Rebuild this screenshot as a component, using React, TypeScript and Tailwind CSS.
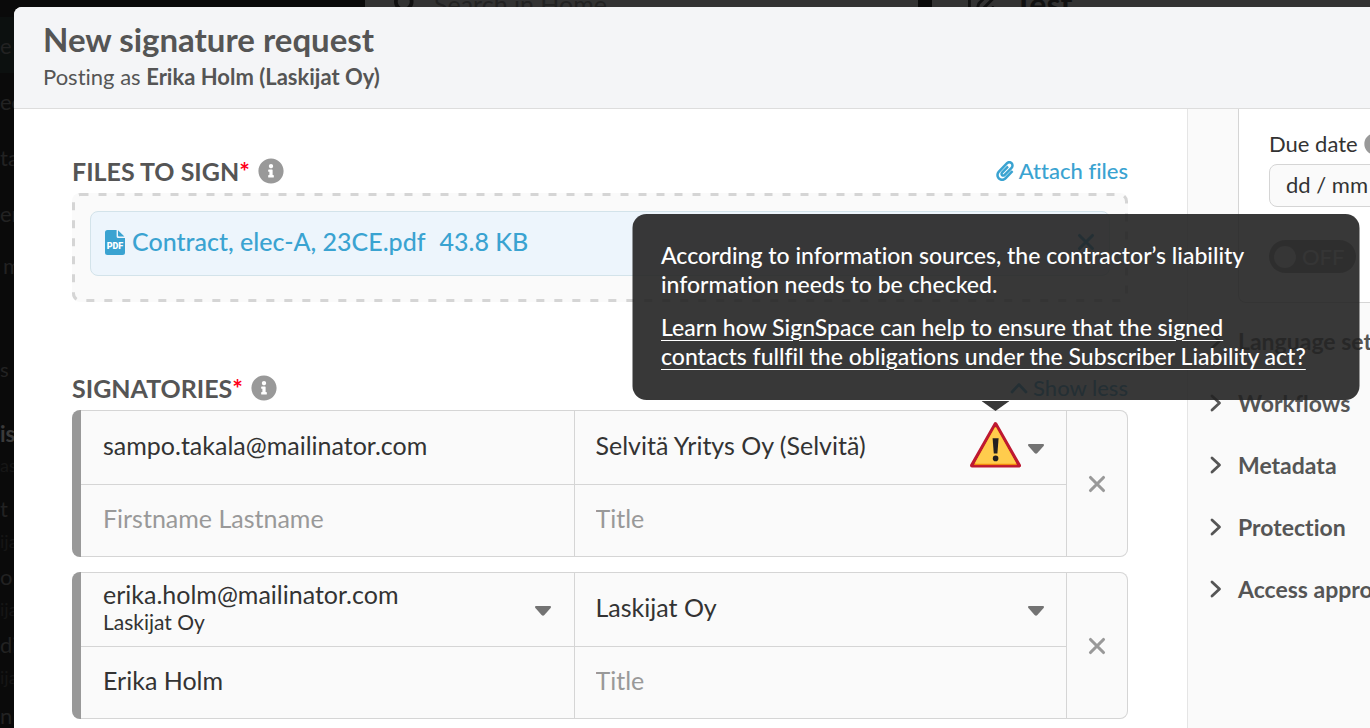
import { useState } from 'react'
import { clsx } from 'clsx'
import { FaInfoCircle, FaPaperclip, FaSearch } from 'react-icons/fa'
import { FaRegPenToSquare } from 'react-icons/fa6'

interface Signatory {
  id: string
  email: string
  emailNote?: string
  name: string
  company: string
  title: string
  warning?: boolean
}

const initialSignatories: Signatory[] = [
  {
    id: 'sampo',
    email: 'sampo.takala@mailinator.com',
    name: '',
    company: 'Selvitä Yritys Oy (Selvitä)',
    title: '',
    warning: true,
  },
  {
    id: 'erika',
    email: 'erika.holm@mailinator.com',
    emailNote: 'Laskijat Oy',
    name: 'Erika Holm',
    company: 'Laskijat Oy',
    title: '',
  },
]

const settings = ['Language settings', 'Workflows', 'Metadata', 'Protection', 'Access approval']

// Sidebar rows that stay visible behind the dialog
const backdropRows = [
  { text: 'e', className: 'h-14 text-[22px] bg-[#0c100f]' },
  { text: 'ec', className: 'h-14 text-[22px]' },
  { text: 'ta', className: 'h-14 text-[22px]' },
  { text: 'er', className: 'h-14 text-[22px]' },
  { text: 'm', className: 'h-12 text-[22px] pl-[3px]' },
  { text: '', className: 'h-[52px]' },
  { text: 's', className: 'h-20 pb-6 text-[20px]' },
  { text: 'is', className: 'h-6 text-[22px] font-bold text-[#3a3a3a]' },
  { text: 'as', className: 'h-10 text-[18px] text-[#161616]' },
  { text: 't g', className: 'h-[46px] text-[22px]' },
  { text: 'ija', className: 'h-5 text-[18px] text-[#161616]' },
  { text: 'o', className: 'h-[50px] text-[22px]' },
  { text: 'ija', className: 'h-4 text-[18px] text-[#161616]' },
  { text: 'di', className: 'h-[54px] text-[22px]' },
  { text: 'ija', className: 'h-3 text-[18px] text-[#161616]' },
  { text: 'n r', className: 'h-16 text-[22px]' },
]

function Cross({ className }: { className?: string }) {
  return (
    <svg viewBox="0 0 18 18" className={className} fill="none" stroke="currentColor" strokeWidth="3.1" strokeLinecap="round">
      <path d="M2.5 2.5 15.5 15.5M15.5 2.5 2.5 15.5" />
    </svg>
  )
}

function Chevron({ className }: { className?: string }) {
  return (
    <svg viewBox="0 0 12 18" className={className} fill="none" stroke="currentColor" strokeWidth="2.8" strokeLinecap="round" strokeLinejoin="round">
      <path d="M2 2 9.5 9 2 16" />
    </svg>
  )
}

function Caret() {
  return (
    <svg viewBox="0 0 18 10" className="pointer-events-none mt-[3px] h-[10px] w-[18px] shrink-0" fill="#737373">
      <path d="M2 0H16Q17.6 0.4 16.6 2L10.4 9Q9 10.4 7.6 9L1.4 2Q0.4 0.4 2 0Z" />
    </svg>
  )
}

function PdfIcon() {
  return (
    <svg viewBox="0 0 20 25" className="h-[25px] w-5 shrink-0">
      <path d="M2.5 0H11.6v6.5A1.5 1.5 0 0 0 13.1 8H20v14.5a2.5 2.5 0 0 1-2.5 2.5h-15A2.5 2.5 0 0 1 0 22.5v-20A2.5 2.5 0 0 1 2.5 0Z" fill="#3aa3d1" />
      <path d="M13 0.2 19.4 6.6H14a1 1 0 0 1-1-1Z" fill="#3aa3d1" />
      <text x="10" y="19" textAnchor="middle" fontSize="9" fontWeight="900" fontFamily="Roboto, sans-serif" fill="#fff">
        PDF
      </text>
    </svg>
  )
}

function WarningIcon() {
  return (
    <svg viewBox="0 0 51 46" className="h-[46px] w-[51px]">
      <path d="M25.5 2.2 49 43.5H2Z" fill="#be1931" stroke="#be1931" strokeWidth="4" strokeLinejoin="round" />
      <path d="M25.5 5 46.5 42.6H4.5Z" fill="#f4900c" stroke="#f4900c" strokeWidth="1" strokeLinejoin="round" />
      <path d="M25.5 6.2 45.2 41H5.8Z" fill="#ffcc4d" stroke="#ffcc4d" strokeWidth="1.5" strokeLinejoin="round" />
      <path d="M22.6 16.2h6l-1.2 15.2h-3.6Z" fill="#231f20" />
      <circle cx="25.6" cy="36.4" r="2.8" fill="#231f20" />
    </svg>
  )
}

function SectionTitle({ children }: { children: string }) {
  return (
    <div className="flex items-center gap-2">
      <h2 className="text-[25px] leading-[26px] font-bold text-[#555]">
        {children}
        <span className="text-[#ff0019]">*</span>
      </h2>
      <button type="button" aria-label={`About ${children.toLowerCase()}`}>
        <FaInfoCircle className="size-[26px] text-[#999]" />
      </button>
    </div>
  )
}

function LiabilityTooltip() {
  return (
    <div
      role="tooltip"
      className="absolute bottom-full left-1/2 z-20 mb-[22px] w-[727px] -translate-x-1/2 rounded-[14px] bg-[#222]/90 px-[29px] pt-[27px] pb-[29px] text-[23px] leading-[29px] font-medium text-white"
    >
      <p>According to information sources, the contractor’s liability information needs to be checked.</p>
      <a href="#liability" className="mt-[14px] block underline decoration-1 underline-offset-4">
        Learn how SignSpace can help to ensure that the signed
        <br />
        contacts fullfil the obligations under the Subscriber Liability act?
      </a>
      <svg viewBox="0 0 28 10" className="absolute top-full left-1/2 mt-px h-[10px] w-7 -translate-x-1/2">
        <path d="M0 0H28L14 10Z" fill="#383838" />
      </svg>
    </div>
  )
}

interface SignatoryCardProps {
  signatory: Signatory
  onChange: (id: string, field: 'email' | 'name' | 'title', value: string) => void
  onRemove: (id: string) => void
}

function SignatoryCard({ signatory, onChange, onRemove }: SignatoryCardProps) {
  const { id, email, emailNote, name, company, title, warning } = signatory
  const inputClass = 'w-full min-w-0 bg-transparent outline-none placeholder:text-[#999]'

  return (
    <div className="flex rounded-lg bg-[#fafafa] text-[25px] text-[#333]">
      <div className="w-[9px] shrink-0 rounded-l-lg bg-[#999]" />
      <div className="grid flex-1 grid-cols-[1fr_1fr_61px] grid-rows-[74px_71px] rounded-r-lg border border-l-0 border-[#d5d5d5]">
        <div className="flex items-center border-b border-[#d5d5d5] px-[22px]">
          <div className="flex-1 pb-1">
            <input
              aria-label="Email"
              className={clsx(inputClass, 'block', emailNote && 'h-7')}
              value={email}
              onChange={(e) => onChange(id, 'email', e.target.value)}
            />
            {emailNote && <p className="text-[21px] leading-[26px]">{emailNote}</p>}
          </div>
          {emailNote && (
            <button type="button" aria-label="Choose email">
              <Caret />
            </button>
          )}
        </div>
        <div className="flex items-center border-b border-l border-[#d5d5d5] px-[21px]">
          <select aria-label="Company" className="min-w-0 flex-1 appearance-none bg-transparent pb-1 outline-none" defaultValue={company}>
            <option>{company}</option>
          </select>
          {warning && (
            <div className="relative mr-[6px] mb-[6px] shrink-0">
              <WarningIcon />
              <LiabilityTooltip />
            </div>
          )}
          <Caret />
        </div>
        <div className="row-span-2 flex items-center justify-center border-l border-[#d5d5d5]">
          <button type="button" aria-label={`Remove ${email}`} className="text-[#999]" onClick={() => onRemove(id)}>
            <Cross className="size-[18px]" />
          </button>
        </div>
        <div className="flex items-center px-[22px] pb-1">
          <input
            aria-label="Name"
            className={inputClass}
            placeholder="Firstname Lastname"
            value={name}
            onChange={(e) => onChange(id, 'name', e.target.value)}
          />
        </div>
        <div className="flex items-center border-l border-[#d5d5d5] px-[21px] pb-1">
          <input
            aria-label="Title"
            className={inputClass}
            placeholder="Title"
            value={title}
            onChange={(e) => onChange(id, 'title', e.target.value)}
          />
        </div>
      </div>
    </div>
  )
}

function Backdrop() {
  return (
    <div aria-hidden="true" className="flex h-full text-[#222]">
      <div className="w-[365px] overflow-hidden pt-[17px]">
        {backdropRows.map((row, index) => (
          <div key={index} className={clsx('flex items-center whitespace-nowrap', row.className)}>
            {row.text}
          </div>
        ))}
      </div>
      <div className="flex h-[22px] flex-1 items-start overflow-hidden bg-[#333] leading-8">
        <div className="-mt-3 flex w-[553px] items-center pl-[29px] text-[25px]">
          <FaSearch className="size-6 text-[#111]" />
          <span className="ml-4">Search in Home</span>
        </div>
        <div className="-mt-3 flex flex-1 items-center border-l-[14px] border-[#0a0a0a] pl-[36px] text-[32px] font-bold text-[#111]">
          <FaRegPenToSquare className="size-[30px]" />
          <span className="ml-4">Test</span>
        </div>
      </div>
    </div>
  )
}

export default function App() {
  const [signatories, setSignatories] = useState(initialSignatories)
  const [reminder, setReminder] = useState(false)
  const [dueDate, setDueDate] = useState('dd / mm / yyyy')

  const handleChange = (id: string, field: 'email' | 'name' | 'title', value: string) => {
    setSignatories((list) => list.map((s) => (s.id === id ? { ...s, [field]: value } : s)))
  }

  const handleRemove = (id: string) => {
    setSignatories((list) => list.filter((s) => s.id !== id))
  }

  return (
    <div className="relative h-screen overflow-hidden bg-[#0a0a0a] font-[Lato,sans-serif] [font-variant-ligatures:none]">
      <Backdrop />

      <div
        role="dialog"
        aria-labelledby="dialog-title"
        className="absolute top-[7px] right-0 bottom-0 left-[14px] flex flex-col rounded-tl-lg bg-white"
      >
        <header className="rounded-tl-lg border-b border-[#ddd] bg-[#f4f5f7] px-[29px] pt-3 pb-[15px] text-[#555]">
          <h1 id="dialog-title" className="text-[33px] leading-10 font-bold">
            New signature request
          </h1>
          <p className="mt-[2px] text-[22px] leading-8">
            Posting as <strong>Erika Holm (Laskijat Oy)</strong>
          </p>
        </header>

        <div className="flex min-h-0 flex-1">
          <main className="relative z-10 min-w-0 flex-1 px-[58px] pt-[49px] pr-[59px]">
            <div className="mb-[9px] flex items-center justify-between">
              <SectionTitle>FILES TO SIGN</SectionTitle>
              <button type="button" className="flex items-center gap-1 text-[22px] leading-[26px] font-medium text-[#3aa3d1]">
                <FaPaperclip className="size-5" />
                Attach files
              </button>
            </div>

            <div className="relative rounded-lg bg-[#fafafa] p-[18px] pb-[26px]">
              <svg className="pointer-events-none absolute inset-0 size-full">
                <rect
                  x="1.5"
                  y="1.5"
                  rx="7"
                  className="h-[calc(100%-3px)] w-[calc(100%-3px)]"
                  fill="none"
                  stroke="#d5d5d5"
                  strokeWidth="3"
                  strokeDasharray="8 10"
                />
              </svg>
              <div className="flex h-[65px] items-center rounded-lg border border-[#d3e3ea] bg-[#edf5fc] px-[14px] pb-[3px] text-[25px] font-medium text-[#3aa3d1]">
                <PdfIcon />
                <a href="#contract" className="ml-[7px]">
                  Contract, elec-A, 23CE.pdf
                </a>
                <span className="ml-[14px] flex-1">43.8 KB</span>
                <button type="button" aria-label="Remove file">
                  <Cross className="size-[18px]" />
                </button>
              </div>
            </div>

            <div className="mt-[73px] mb-[9px] flex items-center justify-between">
              <SectionTitle>SIGNATORIES</SectionTitle>
              <button type="button" className="flex items-center gap-2 text-[22px] leading-[26px] font-medium text-[#3aa3d1]">
                <Chevron className="h-[18px] w-3 -rotate-90" />
                Show less
              </button>
            </div>

            <div className="flex flex-col gap-[15px]">
              {signatories.map((signatory) => (
                <SignatoryCard key={signatory.id} signatory={signatory} onChange={handleChange} onRemove={handleRemove} />
              ))}
            </div>
          </main>

          <aside className="w-[183px] shrink-0 overflow-hidden border-l border-[#e5e5e5] bg-[#fafafa] text-[#333]">
            <div className="ml-[50px] w-[400px] rounded-bl-lg border-b border-l border-[#d5d5d5] bg-white pt-[21px] pb-[29px] pl-[30px]">
              <div className="flex items-center gap-[6px] text-[22px] leading-7">
                <label htmlFor="due-date">Due date</label>
                <FaInfoCircle className="size-[22px] text-[#999]" />
              </div>
              <input
                id="due-date"
                className="mt-[6px] block h-[43px] w-[200px] rounded-lg border border-[#d5d5d5] bg-[#fafafa] px-4 pb-[3px] text-[22px] outline-none"
                value={dueDate}
                onChange={(e) => setDueDate(e.target.value)}
              />
              <button
                type="button"
                role="switch"
                aria-checked={reminder}
                aria-label="Reminder"
                className="mt-[33px] flex h-[33px] w-[87px] items-center gap-[6px] rounded-full bg-[#999] px-[5px] text-[22px] text-[#e0e0e0]"
                onClick={() => setReminder(!reminder)}
              >
                <span className="size-[22px] shrink-0 rounded-full bg-[#e5e5e5]" />
                {reminder ? 'ON' : 'OFF'}
              </button>
            </div>
            <nav className="flex flex-col pt-[7px]">
              {settings.map((label) => (
                <button
                  key={label}
                  type="button"
                  className="flex h-[62px] items-center gap-4 pl-[22px] text-[23px] font-bold whitespace-nowrap text-[#555]"
                >
                  <Chevron className="h-[18px] w-3 shrink-0" />
                  {label}
                </button>
              ))}
            </nav>
          </aside>
        </div>
      </div>
    </div>
  )
}
